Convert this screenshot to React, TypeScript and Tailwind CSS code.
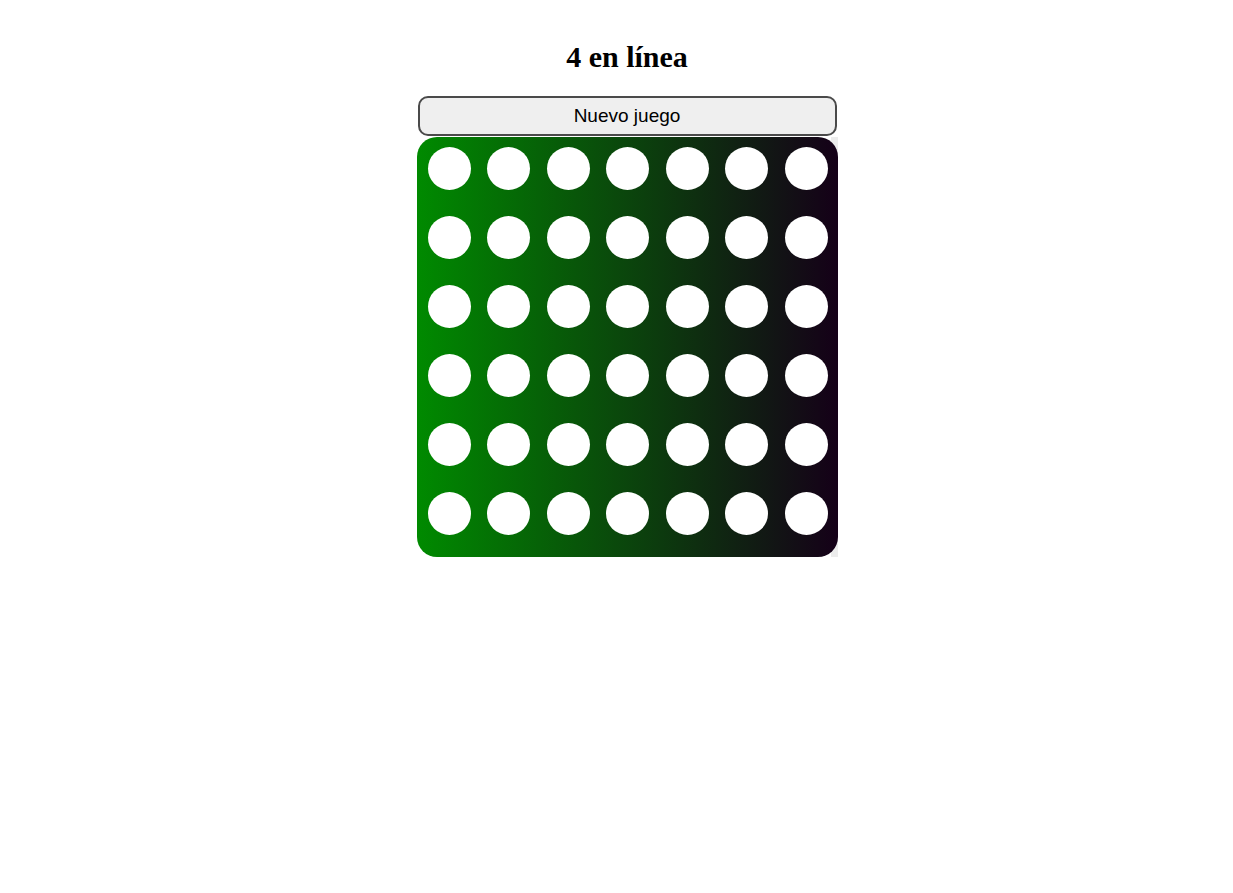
import React from "react";

export default function App() {
  const rows = Array.from({ length: 6 });
  const cols = Array.from({ length: 7 });
  return (
    <div className="min-h-[893px] bg-white flex flex-col items-center pt-[38px] pl-[21px]">
      <h1
        className="text-[30px] font-bold leading-[37px] text-black mb-[21px]"
        style={{ fontFamily: '"Liberation Serif", "Times New Roman", serif' }}
      >
        4 en línea
      </h1>
      <button
        className="w-[419px] h-[40px] rounded-[10px] border-2 border-[#4a4a4a] bg-[#efefef] text-[19px] text-black"
        style={{ fontFamily: '"Liberation Sans", Arial, sans-serif' }}
      >
        Nuevo juego
      </button>
      <div className="mt-[1px] bg-[linear-gradient(to_right,transparent_calc(100%-7px),#ececec_calc(100%-7px))]">
        <div className="w-[421px] h-[420px] rounded-[20px] bg-[linear-gradient(to_right,#008a00,#150018)] pt-[10px] pl-[11px] pr-[10px] grid grid-cols-[repeat(7,43px)] justify-between content-start gap-y-[26px]">
          {rows.map((_, r) =>
            cols.map((_, c) => (
              <div key={`${r}-${c}`} className="w-[43px] h-[43px] rounded-full bg-white" />
            ))
          )}
        </div>
      </div>
    </div>
  );
}
